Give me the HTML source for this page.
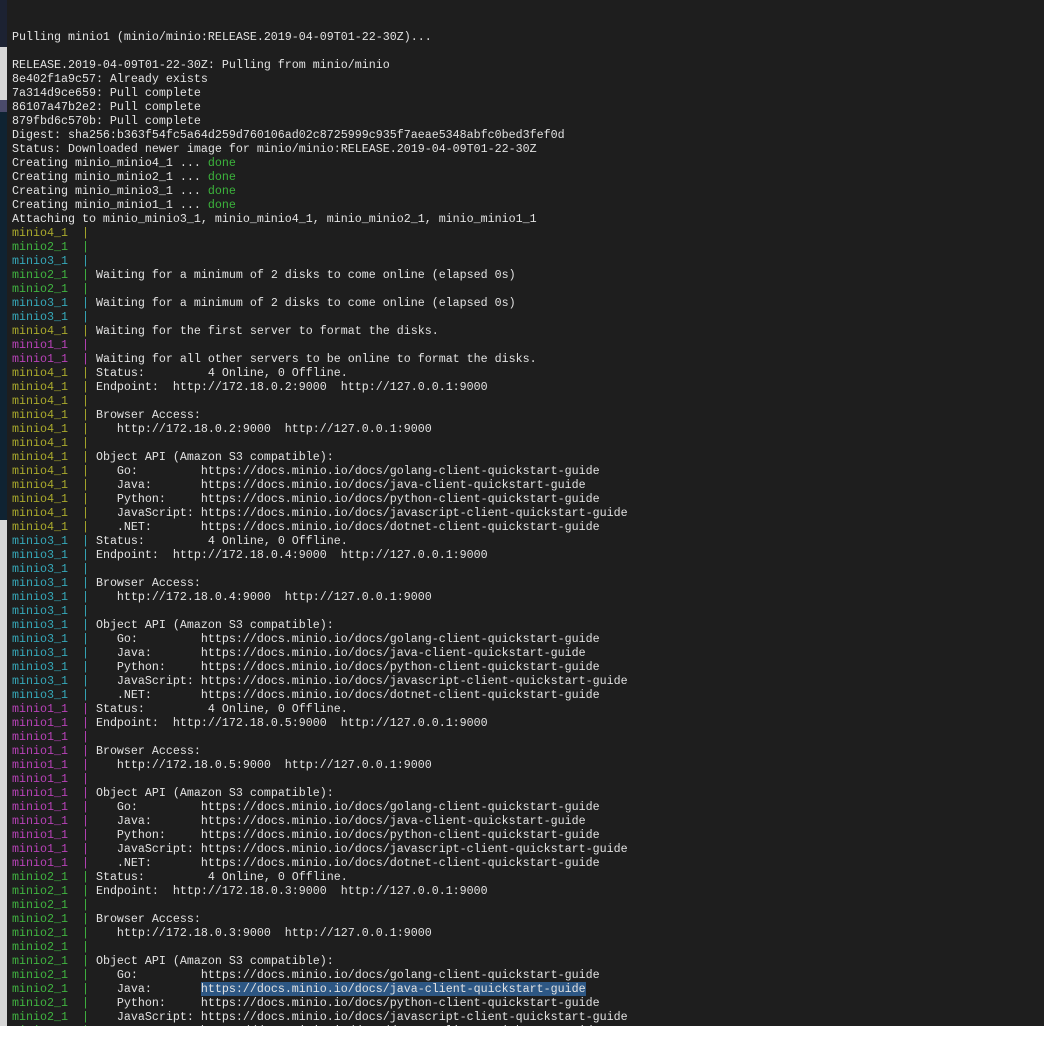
<!DOCTYPE html>
<html><head><meta charset="utf-8"><style>
html,body{margin:0;padding:0;width:1044px;height:1052px;background:#fff;overflow:hidden}
#strip{position:absolute;left:0;top:0;width:7px;height:1026px;background:#d6d6d6}
#s1{position:absolute;left:0;top:0;width:7px;height:47px;background:#1c2232}
#s2{position:absolute;left:0;top:100px;width:7px;height:12px;background:#4a4a6a}
#s3{position:absolute;left:0;top:112px;width:7px;height:408px;background:#0f2332}
#term{position:absolute;left:7px;top:0;width:1037px;height:1026px;background:#1e1e1e;overflow:hidden}
pre{position:absolute;left:5px;top:30px;margin:0;font-family:"Liberation Mono",monospace;font-size:11.67px;line-height:14px;color:#e2e2e2}
.y{color:#aaaa2c}.g{color:#40b440}.c{color:#36a9ba}.m{color:#b842b8}.d{color:#3cb43c}
.h{background:#2d5784}
</style></head><body>
<div id="strip"></div><div id="s1"></div><div id="s2"></div><div id="s3"></div>
<div id="term"><pre>Pulling minio1 (minio/minio:RELEASE.2019-04-09T01-22-30Z)...

RELEASE.2019-04-09T01-22-30Z: Pulling from minio/minio
8e402f1a9c57: Already exists
7a314d9ce659: Pull complete
86107a47b2e2: Pull complete
879fbd6c570b: Pull complete
Digest: sha256:b363f54fc5a64d259d760106ad02c8725999c935f7aeae5348abfc0bed3fef0d
Status: Downloaded newer image for minio/minio:RELEASE.2019-04-09T01-22-30Z
Creating minio_minio4_1 ... <span class="d">done</span>
Creating minio_minio2_1 ... <span class="d">done</span>
Creating minio_minio3_1 ... <span class="d">done</span>
Creating minio_minio1_1 ... <span class="d">done</span>
Attaching to minio_minio3_1, minio_minio4_1, minio_minio2_1, minio_minio1_1
<span class="y">minio4_1  |</span>
<span class="g">minio2_1  |</span>
<span class="c">minio3_1  |</span>
<span class="g">minio2_1  |</span> Waiting for a minimum of 2 disks to come online (elapsed 0s)
<span class="g">minio2_1  |</span>
<span class="c">minio3_1  |</span> Waiting for a minimum of 2 disks to come online (elapsed 0s)
<span class="c">minio3_1  |</span>
<span class="y">minio4_1  |</span> Waiting for the first server to format the disks.
<span class="m">minio1_1  |</span>
<span class="m">minio1_1  |</span> Waiting for all other servers to be online to format the disks.
<span class="y">minio4_1  |</span> Status:         4 Online, 0 Offline.
<span class="y">minio4_1  |</span> Endpoint:  http://172.18.0.2:9000  http://127.0.0.1:9000
<span class="y">minio4_1  |</span>
<span class="y">minio4_1  |</span> Browser Access:
<span class="y">minio4_1  |</span>    http://172.18.0.2:9000  http://127.0.0.1:9000
<span class="y">minio4_1  |</span>
<span class="y">minio4_1  |</span> Object API (Amazon S3 compatible):
<span class="y">minio4_1  |</span>    Go:         https://docs.minio.io/docs/golang-client-quickstart-guide
<span class="y">minio4_1  |</span>    Java:       https://docs.minio.io/docs/java-client-quickstart-guide
<span class="y">minio4_1  |</span>    Python:     https://docs.minio.io/docs/python-client-quickstart-guide
<span class="y">minio4_1  |</span>    JavaScript: https://docs.minio.io/docs/javascript-client-quickstart-guide
<span class="y">minio4_1  |</span>    .NET:       https://docs.minio.io/docs/dotnet-client-quickstart-guide
<span class="c">minio3_1  |</span> Status:         4 Online, 0 Offline.
<span class="c">minio3_1  |</span> Endpoint:  http://172.18.0.4:9000  http://127.0.0.1:9000
<span class="c">minio3_1  |</span>
<span class="c">minio3_1  |</span> Browser Access:
<span class="c">minio3_1  |</span>    http://172.18.0.4:9000  http://127.0.0.1:9000
<span class="c">minio3_1  |</span>
<span class="c">minio3_1  |</span> Object API (Amazon S3 compatible):
<span class="c">minio3_1  |</span>    Go:         https://docs.minio.io/docs/golang-client-quickstart-guide
<span class="c">minio3_1  |</span>    Java:       https://docs.minio.io/docs/java-client-quickstart-guide
<span class="c">minio3_1  |</span>    Python:     https://docs.minio.io/docs/python-client-quickstart-guide
<span class="c">minio3_1  |</span>    JavaScript: https://docs.minio.io/docs/javascript-client-quickstart-guide
<span class="c">minio3_1  |</span>    .NET:       https://docs.minio.io/docs/dotnet-client-quickstart-guide
<span class="m">minio1_1  |</span> Status:         4 Online, 0 Offline.
<span class="m">minio1_1  |</span> Endpoint:  http://172.18.0.5:9000  http://127.0.0.1:9000
<span class="m">minio1_1  |</span>
<span class="m">minio1_1  |</span> Browser Access:
<span class="m">minio1_1  |</span>    http://172.18.0.5:9000  http://127.0.0.1:9000
<span class="m">minio1_1  |</span>
<span class="m">minio1_1  |</span> Object API (Amazon S3 compatible):
<span class="m">minio1_1  |</span>    Go:         https://docs.minio.io/docs/golang-client-quickstart-guide
<span class="m">minio1_1  |</span>    Java:       https://docs.minio.io/docs/java-client-quickstart-guide
<span class="m">minio1_1  |</span>    Python:     https://docs.minio.io/docs/python-client-quickstart-guide
<span class="m">minio1_1  |</span>    JavaScript: https://docs.minio.io/docs/javascript-client-quickstart-guide
<span class="m">minio1_1  |</span>    .NET:       https://docs.minio.io/docs/dotnet-client-quickstart-guide
<span class="g">minio2_1  |</span> Status:         4 Online, 0 Offline.
<span class="g">minio2_1  |</span> Endpoint:  http://172.18.0.3:9000  http://127.0.0.1:9000
<span class="g">minio2_1  |</span>
<span class="g">minio2_1  |</span> Browser Access:
<span class="g">minio2_1  |</span>    http://172.18.0.3:9000  http://127.0.0.1:9000
<span class="g">minio2_1  |</span>
<span class="g">minio2_1  |</span> Object API (Amazon S3 compatible):
<span class="g">minio2_1  |</span>    Go:         https://docs.minio.io/docs/golang-client-quickstart-guide
<span class="g">minio2_1  |</span>    Java:       <span class="h">https://docs.minio.io/docs/java-client-quickstart-guide</span>
<span class="g">minio2_1  |</span>    Python:     https://docs.minio.io/docs/python-client-quickstart-guide
<span class="g">minio2_1  |</span>    JavaScript: https://docs.minio.io/docs/javascript-client-quickstart-guide
<span class="g">minio2_1  |</span>    .NET:       https://docs.minio.io/docs/dotnet-client-quickstart-guide
</pre></div>
</body></html>
